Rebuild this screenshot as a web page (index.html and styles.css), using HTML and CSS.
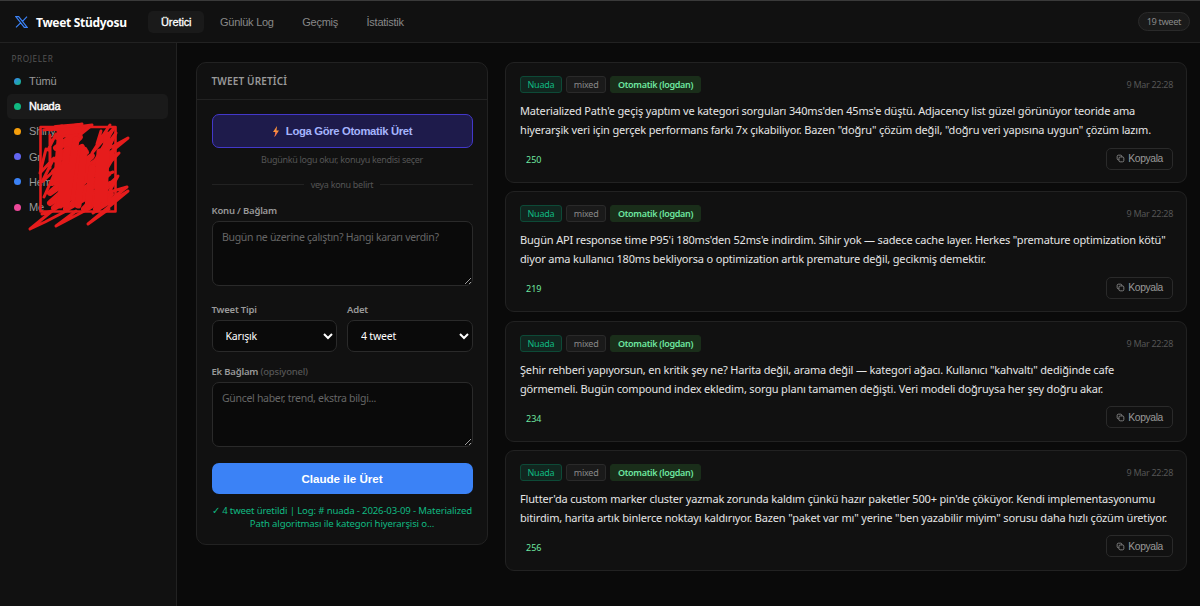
FILE: index.html
```html
<!DOCTYPE html>
<html lang="tr">
<head>
    <meta charset="UTF-8">
    <meta name="viewport" content="width=device-width, initial-scale=1.0">
    <title>Tweet Stüdyosu</title>
    <link rel="stylesheet" href="styles.css">
</head>
<body>

<svg class="defs" width="0" height="0">
    <symbol id="copy" viewBox="0 0 10 10">
        <rect x="1.3" y="1.3" width="5.2" height="5.2" rx="1.4"/>
        <rect x="3.3" y="3.3" width="5.4" height="5.4" rx="1.4" fill="#111"/>
    </symbol>
</svg>

<header class="header">
    <div class="logo">
        <svg width="13" height="12" viewBox="0 0 13 12"><path d="M.8.6h2.900l8.500 10.800H9.300zM12 .6 7.300 5.600M5.600 6.800 1 11.400" fill="none" stroke="#3b82f6" stroke-width="1.2"/></svg>
        <span>Tweet Stüdyosu</span>
    </div>
    <nav class="tabs">
        <button class="tab active">Üretici</button>
        <button class="tab">Günlük Log</button>
        <button class="tab">Geçmiş</button>
        <button class="tab">İstatistik</button>
    </nav>
    <span class="count">19 tweet</span>
</header>

<div class="layout">
    <aside class="sidebar">
        <div class="sidebar-title">PROJELER</div>
        <div class="project"><i class="dot all"></i>Tümü</div>
        <div class="project active"><i class="dot green"></i>Nuada</div>
        <div class="project"><i class="dot orange"></i>Shiny</div>
        <div class="project"><i class="dot indigo"></i>Gr</div>
        <div class="project"><i class="dot blue"></i>Hem</div>
        <div class="project"><i class="dot pink"></i>Me</div>
        <svg class="scribble" width="110" height="112" viewBox="25 120 110 112">
            <path d="M40.500 127H115.500V211.500H40.500Z" stroke-width="2.600"/>
            <path d="M56 128 80 126 57 137 84 128 56 148 80 137 56 160 82 147 54 172 86 152 52 183 92 156 50 193 98 160 50 203 104 164 54 208 108 174 66 209 110 184 84 209 111 194 96 209" stroke-width="6"/>
            <path d="M44 130 62 126M50 130 82 124M56 134 48 150M50 135 50 168M46 149 40 173 54 158 42 182 57 168 44 197M84 126 92 125 76 138M101 131 97 144 110 125 92 153 114 128 93 164 116 133 95 176 117 144 98 184 115 155M104 151 128 138 96 164 119 153 94 180 113 172M102 205 118 176 96 196 127 187 93 213 128 191 88 224 109 209M76 211 56 226 92 207M68 210 45 222 30 229 52 211 42 214" stroke-width="3"/>
            <path d="M60 132 78 130M60 140 57 178M67 150 60 205M76 140 66 205M84 150 78 205M92 168 88 207M100 152 97 209M107 135 104 200" stroke-width="7"/>
        </svg>
    </aside>

    <main class="main">
        <section class="panel">
            <h2 class="panel-title">TWEET ÜRETİCİ</h2>
            <div class="panel-body">
                <button class="auto-btn">
                    <svg width="8" height="11" viewBox="0 0 8 11"><path d="M5 0 1 6h2.500L2.500 11 7 4.500H4.500z" fill="#fb923c"/><path d="M3.500 6 2.500 11 5.400 6.800z" fill="#f06a50"/></svg>
                    Loga Göre Otomatik Üret
                </button>
                <p class="hint">Bugünkü logu okur, konuyu kendisi seçer</p>
                <div class="divider"><span>veya konu belirt</span></div>

                <label class="label">Konu / Bağlam</label>
                <textarea class="input" placeholder="Bugün ne üzerine çalıştın? Hangi kararı verdin?"></textarea>

                <div class="row">
                    <div>
                        <label class="label">Tweet Tipi</label>
                        <select class="select"><option>Karışık</option></select>
                    </div>
                    <div>
                        <label class="label">Adet</label>
                        <select class="select"><option>4 tweet</option></select>
                    </div>
                </div>

                <label class="label">Ek Bağlam <span>(opsiyonel)</span></label>
                <textarea class="input" placeholder="Güncel haber, trend, ekstra bilgi..."></textarea>

                <button class="submit">Claude ile Üret</button>
                <p class="status">✓ 4 tweet üretildi | Log: # nuada - 2026-03-09 - Materialized<br>Path algoritması ile kategori hiyerarşisi o...</p>
            </div>
        </section>

        <section class="tweets">
            <article class="tweet">
                <div class="tweet-head">
                    <span class="tag project-tag">Nuada</span>
                    <span class="tag">mixed</span>
                    <span class="tag auto-tag">Otomatik (logdan)</span>
                    <time>9 Mar 22:28</time>
                </div>
                <p class="tweet-text">Materialized Path'e geçiş yaptım ve kategori sorguları 340ms'den 45ms'e düştü. Adjacency list güzel görünüyor teoride ama<br>hiyerarşik veri için gerçek performans farkı 7x çıkabiliyor. Bazen "doğru" çözüm değil, "doğru veri yapısına uygun" çözüm lazım.</p>
                <div class="tweet-foot">
                    <span class="chars">250</span>
                    <button class="copy"><svg width="9" height="9"><use href="#copy"/></svg>Kopyala</button>
                </div>
            </article>

            <article class="tweet">
                <div class="tweet-head">
                    <span class="tag project-tag">Nuada</span>
                    <span class="tag">mixed</span>
                    <span class="tag auto-tag">Otomatik (logdan)</span>
                    <time>9 Mar 22:28</time>
                </div>
                <p class="tweet-text">Bugün API response time P95'i 180ms'den 52ms'e indirdim. Sihir yok — sadece cache layer. Herkes "premature optimization kötü"<br>diyor ama kullanıcı 180ms bekliyorsa o optimization artık premature değil, gecikmiş demektir.</p>
                <div class="tweet-foot">
                    <span class="chars">219</span>
                    <button class="copy"><svg width="9" height="9"><use href="#copy"/></svg>Kopyala</button>
                </div>
            </article>

            <article class="tweet">
                <div class="tweet-head">
                    <span class="tag project-tag">Nuada</span>
                    <span class="tag">mixed</span>
                    <span class="tag auto-tag">Otomatik (logdan)</span>
                    <time>9 Mar 22:28</time>
                </div>
                <p class="tweet-text">Şehir rehberi yapıyorsun, en kritik şey ne? Harita değil, arama değil — kategori ağacı. Kullanıcı "kahvaltı" dediğinde cafe<br>görmemeli. Bugün compound index ekledim, sorgu planı tamamen değişti. Veri modeli doğruysa her şey doğru akar.</p>
                <div class="tweet-foot">
                    <span class="chars">234</span>
                    <button class="copy"><svg width="9" height="9"><use href="#copy"/></svg>Kopyala</button>
                </div>
            </article>

            <article class="tweet">
                <div class="tweet-head">
                    <span class="tag project-tag">Nuada</span>
                    <span class="tag">mixed</span>
                    <span class="tag auto-tag">Otomatik (logdan)</span>
                    <time>9 Mar 22:28</time>
                </div>
                <p class="tweet-text">Flutter'da custom marker cluster yazmak zorunda kaldım çünkü hazır paketler 500+ pin'de çöküyor. Kendi implementasyonumu<br>bitirdim, harita artık binlerce noktayı kaldırıyor. Bazen "paket var mı" yerine "ben yazabilir miyim" sorusu daha hızlı çözüm üretiyor.</p>
                <div class="tweet-foot">
                    <span class="chars">256</span>
                    <button class="copy"><svg width="9" height="9"><use href="#copy"/></svg>Kopyala</button>
                </div>
            </article>
        </section>
    </main>
</div>

</body>
</html>
```
FILE: styles.css
```css
* {
    box-sizing: border-box;
    margin: 0;
    padding: 0;
}

body {
    height: 606px;
    overflow: hidden;
    background: #0a0a0a;
    color: #e5e5e5;
    font-family: "Noto Sans", sans-serif;
    font-size: 11px;
    display: flex;
    flex-direction: column;
}

button {
    font-family: "Liberation Sans", sans-serif;
    cursor: pointer;
}

.defs {
    position: absolute;
}

/* header */
.header {
    height: 43px;
    flex: none;
    display: flex;
    align-items: center;
    padding: 0 10px 0 15px;
    background: #111;
    border-top: 1px solid #3a3a3a;
    border-bottom: 1px solid #222;
}

.logo {
    display: flex;
    align-items: center;
    gap: 8px;
    width: 133px;
    color: #fff;
    font-size: 12px;
    font-weight: 700;
    white-space: nowrap;
}

.logo span {
    letter-spacing: -.3px;
    padding-top: 1px;
}

.tabs {
    display: flex;
    gap: 3px;
}

.tab {
    height: 22px;
    padding: 0 12.5px 0 13px;
    border: none;
    border-radius: 5px;
    background: none;
    color: #888;
    font-size: 11px;
    letter-spacing: -.25px;
}

.tab.active {
    background: #1a1a1a;
    color: #fff;
    letter-spacing: -.1px;
    -webkit-text-stroke: .3px #fff;
}

.count {
    margin-left: auto;
    height: 19px;
    padding: 0 8px;
    border: 1px solid #2a2a2a;
    border-radius: 10px;
    background: #1a1a1a;
    color: #888;
    font-size: 9.3px;
    line-height: 17px;
    letter-spacing: -.4px;
}

/* sidebar */
.layout {
    flex: 1;
    display: flex;
}

.sidebar {
    position: relative;
    width: 177px;
    flex: none;
    padding: 10px 8px 0 7px;
    background: #111;
    border-right: 1px solid #222;
}

.sidebar-title {
    padding-left: 4.5px;
    margin-bottom: 3.5px;
    color: #555;
    font-size: 8.2px;
    line-height: 12px;
    letter-spacing: .6px;
}

.project {
    display: flex;
    align-items: center;
    gap: 8px;
    height: 25.2px;
    padding-left: 7px;
    border-radius: 5px;
    color: #999;
    font-family: "Liberation Sans", sans-serif;
    font-size: 11px;
    letter-spacing: -.2px;
}

.project.active {
    background: #1a1a1a;
    color: #fff;
    -webkit-text-stroke: .4px #fff;
}

.dot {
    width: 7px;
    height: 7px;
    border-radius: 50%;
}

.all { background: linear-gradient(135deg, #3b82f6, #10b981); }
.green { background: #10b981; }
.orange { background: #f59e0b; }
.indigo { background: #6366f1; }
.blue { background: #3b82f6; }
.pink { background: #ec4899; }

.scribble {
    position: absolute;
    left: 25px;
    top: 77px;
    fill: none;
    stroke: #e61c1c;
    stroke-linecap: round;
    stroke-linejoin: round;
}

/* generator */
.main {
    flex: 1;
    min-width: 0;
    display: flex;
    align-items: flex-start;
    gap: 17px;
    padding: 19px 13px 0 19px;
}

.panel {
    width: 292px;
    height: 483px;
    flex: none;
    background: #111;
    border: 1px solid #222;
    border-radius: 10px;
}

.panel-title {
    height: 37px;
    padding-left: 14.5px;
    border-bottom: 1px solid #222;
    color: #999;
    font-size: 10px;
    font-weight: 600;
    line-height: 37px;
    letter-spacing: .15px;
}

.panel-body {
    padding: 14px 14.5px 0;
}

.auto-btn {
    display: flex;
    align-items: center;
    justify-content: center;
    gap: 6px;
    width: 100%;
    height: 34px;
    border: 1px solid #4338ca;
    border-radius: 7px;
    background: #1e1b4b;
    color: #a5b4fc;
    font-size: 11.3px;
    font-weight: 700;
    letter-spacing: -.35px;
}

.hint {
    margin-top: 5px;
    color: #555;
    font-size: 9px;
    line-height: 13px;
    letter-spacing: -.3px;
    text-align: center;
}

.divider {
    display: flex;
    align-items: center;
    gap: 7px;
    height: 13px;
    margin: 12px 0 13px;
    color: #555;
    font-size: 9px;
    letter-spacing: -.3px;
}

.divider::before,
.divider::after {
    content: "";
    flex: 1;
    height: 1px;
    background: #222;
}

.label {
    display: block;
    height: 17px;
    color: #999;
    font-size: 9.5px;
    font-weight: 600;
    line-height: 13px;
    letter-spacing: -.2px;
}

.label span {
    color: #555;
    font-weight: 500;
}

.input {
    display: block;
    width: 100%;
    height: 65px;
    margin-bottom: 16.5px;
    padding: 8px 9.5px;
    border: 1px solid #2a2a2a;
    border-radius: 7px;
    background: #0a0a0a;
    color: #e5e5e5;
    font-family: inherit;
    font-size: 10.5px;
    line-height: 15px;
    letter-spacing: -.3px;
    resize: vertical;
    color-scheme: dark;
}

.input::placeholder {
    color: #666;
}

.row {
    display: grid;
    grid-template-columns: 1fr 1fr;
    gap: 10px;
    margin-bottom: 13px;
}

.select {
    width: 100%;
    height: 32px;
    padding: 0 0 0 9px;
    border: 1px solid #2a2a2a;
    border-radius: 7px;
    background: #0a0a0a;
    color: #fff;
    font-family: inherit;
    font-size: 10.5px;
    letter-spacing: -.2px;
}

.submit {
    width: 100%;
    height: 31px;
    border: none;
    border-radius: 7px;
    background: #3b82f6;
    color: #fff;
    font-size: 11.6px;
    font-weight: 700;
}

.status {
    margin-top: 10px;
    color: #10b981;
    font-size: 9.6px;
    line-height: 13px;
    letter-spacing: -.15px;
    text-align: center;
    white-space: nowrap;
}

/* tweets */
.tweets {
    flex: 1;
    min-width: 0;
    display: flex;
    flex-direction: column;
    gap: 8.3px;
}

.tweet {
    height: 121px;
    padding: 12.5px 13px 0 14px;
    background: #111;
    border: 1px solid #222;
    border-radius: 9px;
}

.tweet-head {
    display: flex;
    align-items: center;
    gap: 4.5px;
    height: 18px;
}

.tag {
    height: 17px;
    padding: 0 6.5px;
    border: 1px solid #2a2a2a;
    border-radius: 3px;
    background: #1a1a1a;
    color: #888;
    font-size: 9px;
    line-height: 16px;
    letter-spacing: -.25px;
}

.project-tag {
    border-color: #0d4a37;
    background: #11261f;
    color: #10b981;
}

.auto-tag {
    border-color: #1a2e1a;
    background: #1a2e1a;
    color: #6ee7a0;
    font-weight: 600;
    letter-spacing: -.3px;
}

.tweet-head time {
    margin-left: auto;
    color: #555;
    font-size: 9px;
    letter-spacing: -.3px;
}

.tweet-text {
    margin-top: 7.5px;
    color: #e5e5e5;
    font-size: 11px;
    line-height: 19px;
    letter-spacing: -.17px;
    white-space: nowrap;
}

.tweet-foot {
    display: flex;
    align-items: center;
    justify-content: space-between;
    margin-top: 8.5px;
}

.chars {
    padding: 2px 0 0 6px;
    color: #6ee7a0;
    font-size: 9px;
}

.copy {
    display: flex;
    align-items: center;
    gap: 3px;
    height: 22px;
    padding: 0 9px;
    border: 1px solid #2a2a2a;
    border-radius: 5px;
    background: none;
    color: #999;
    font-size: 10.3px;
    letter-spacing: -.35px;
}

.copy svg {
    fill: none;
    stroke: #888;
    stroke-width: 1;
}
```
